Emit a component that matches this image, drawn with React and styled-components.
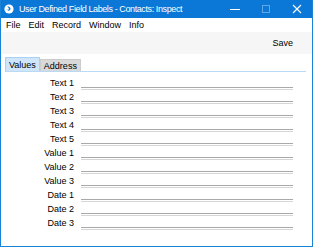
import styled, { createGlobalStyle } from 'styled-components'

const GlobalStyle = createGlobalStyle`
  html, body {
    margin: 0;
    padding: 0;
    background: #ffffff;
  }
  body {
    font-family: "Liberation Sans", Arial, sans-serif;
    font-size: 9px;
    color: #000000;
  }
`

const Window = styled.div`
  width: 313px;
  height: 247px;
  box-sizing: border-box;
  border: 1px solid #1883d7;
  border-top: none;
  display: flex;
  flex-direction: column;
  background: #ffffff;
  overflow: hidden;
`

const TitleBar = styled.div`
  height: 18px;
  background: #0b78d7;
  color: #ffffff;
  display: flex;
  align-items: center;
  padding-left: 3px;
  font-size: 9px;
`

const TitleText = styled.span`
  margin-left: 5px;
  flex: 1;
  white-space: nowrap;
  letter-spacing: -0.4px;
`

const WinButton = styled.div`
  width: 31px;
  height: 18px;
  display: flex;
  align-items: center;
  justify-content: center;
  opacity: ${p => (p.$dim ? 0.35 : 1)};
`

const MenuBar = styled.div`
  height: 14px;
  display: flex;
  align-items: center;
  gap: 8px;
  padding-left: 5px;
  background: #ffffff;
`

const MenuItem = styled.span`
  white-space: nowrap;
`

const Toolbar = styled.div`
  height: 22px;
  background: #f6f6f6;
  display: flex;
  align-items: center;
  justify-content: flex-end;
  padding-right: 19px;
`

const Content = styled.div`
  flex: 1;
  padding: 3px 6px 0 4px;
  display: flex;
  flex-direction: column;
`

const TabStrip = styled.div`
  display: flex;
  align-items: flex-end;
  height: 14px;
  border-bottom: 1px solid #b9d9f5;
`

const Tab = styled.div`
  height: ${p => (p.$active ? 14 : 12)}px;
  box-sizing: border-box;
  padding: 0 3px;
  display: flex;
  align-items: center;
  background: ${p => (p.$active ? '#cfe6fa' : '#d9d9d9')};
  border: 1px solid ${p => (p.$active ? '#a9d1f3' : '#cccccc')};
  border-bottom: none;
`

const Fields = styled.div`
  display: grid;
  grid-template-columns: 69px 212px;
  column-gap: 7px;
  padding-top: 4px;
`

const Label = styled.div`
  height: 14px;
  line-height: 14px;
  text-align: right;
  white-space: nowrap;
`

const FieldLine = styled.div`
  height: 14px;
  box-sizing: border-box;
  border-bottom: 1px solid #d6d6d6;
  position: relative;

  &::after {
    content: '';
    position: absolute;
    left: 0;
    right: 0;
    bottom: 1px;
    border-bottom: 1px solid #a9a9a9;
  }
`

const AppIcon = () => (
  <svg width="10" height="10" viewBox="0 0 10 10">
    <circle cx="5" cy="5" r="4.6" fill="#ffffff" />
    <path d="M3 2.5 C5.5 2 7.5 4 6 6 C5 7.2 3.2 7 2.6 5.6 C4 6.2 5.2 5.4 4.8 4.2 C4.5 3.4 3.6 3 3 2.5 Z" fill="#0b78d7" />
  </svg>
)

const labels = ['Text 1', 'Text 2', 'Text 3', 'Text 4', 'Text 5', 'Value 1', 'Value 2', 'Value 3', 'Date 1', 'Date 2', 'Date 3']

const App = () => (
  <>
    <GlobalStyle />
    <Window>
      <TitleBar>
        <AppIcon />
        <TitleText>User Defined Field Labels - Contacts: Inspect</TitleText>
        <WinButton>
          <svg width="10" height="10" viewBox="0 0 10 10"><path d="M0 5.5 H10" stroke="#fff" strokeWidth="1" /></svg>
        </WinButton>
        <WinButton $dim>
          <svg width="10" height="10" viewBox="0 0 10 10"><rect x="1.5" y="1.5" width="7" height="7" fill="none" stroke="#fff" strokeWidth="1" /></svg>
        </WinButton>
        <WinButton>
          <svg width="10" height="10" viewBox="0 0 10 10"><path d="M1 1 L9 9 M9 1 L1 9" stroke="#fff" strokeWidth="1.1" /></svg>
        </WinButton>
      </TitleBar>
      <MenuBar>
        <MenuItem>File</MenuItem>
        <MenuItem>Edit</MenuItem>
        <MenuItem>Record</MenuItem>
        <MenuItem>Window</MenuItem>
        <MenuItem>Info</MenuItem>
      </MenuBar>
      <Toolbar>Save</Toolbar>
      <Content>
        <TabStrip>
          <Tab $active>Values</Tab>
          <Tab>Address</Tab>
        </TabStrip>
        <Fields>
          {labels.map(l => (
            <>
              <Label key={l}>{l}</Label>
              <FieldLine key={l + '-line'} />
            </>
          ))}
        </Fields>
      </Content>
    </Window>
  </>
)

export default App
